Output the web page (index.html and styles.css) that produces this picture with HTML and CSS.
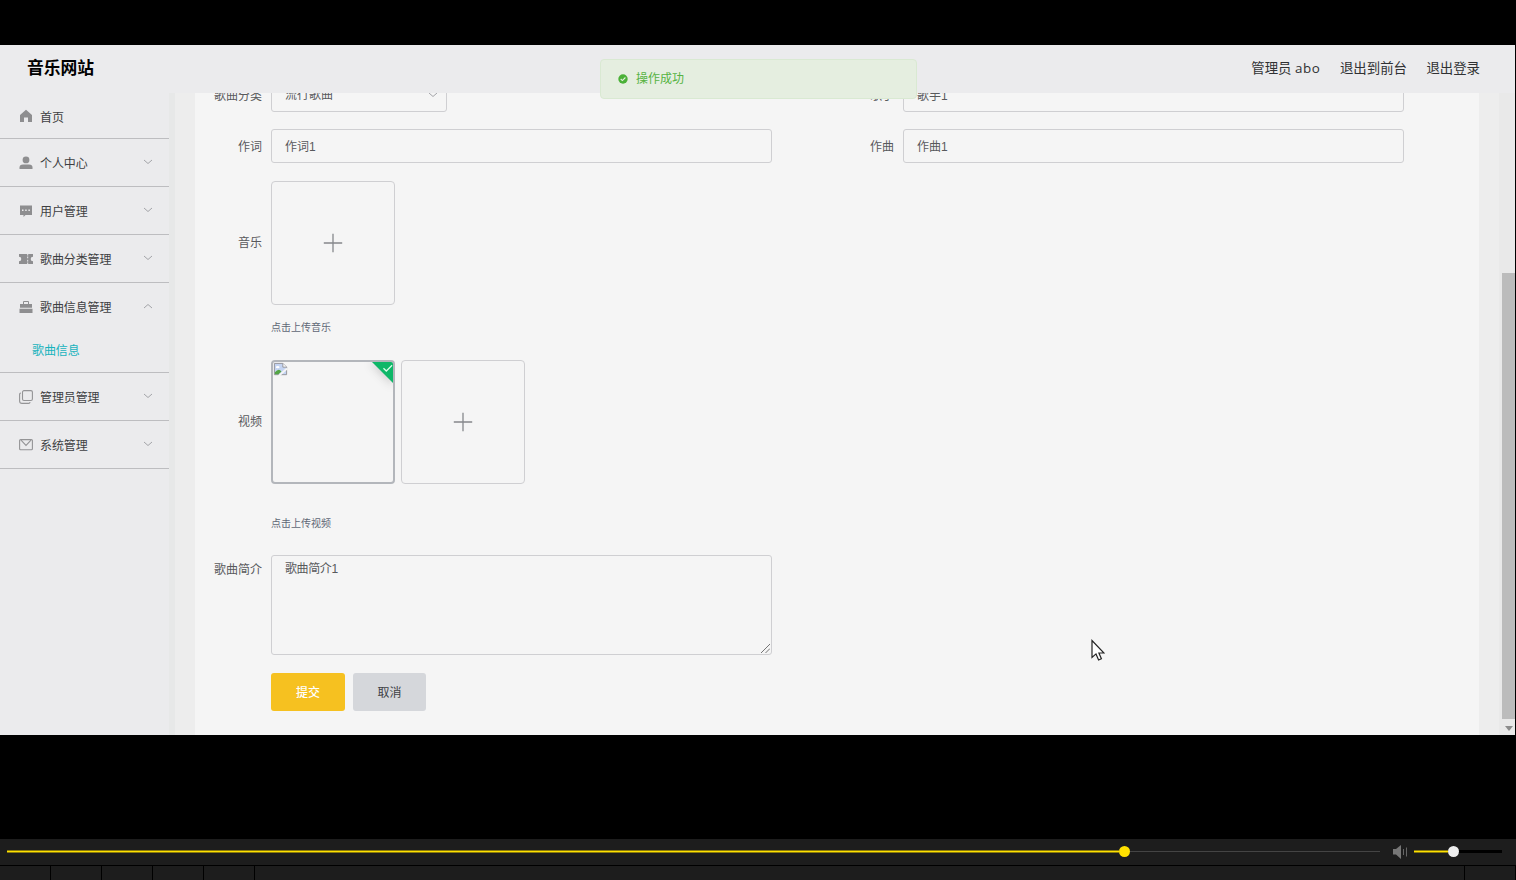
FILE: index.html
```html
<!DOCTYPE html>
<html lang="zh-CN">
<head>
<meta charset="utf-8">
<title>音乐网站</title>
<link rel="stylesheet" href="styles.css">
</head>
<body>
<div class="app">
  <header class="header">
    <h1 class="brand">音乐网站</h1>
    <nav class="user-nav"><span>管理员 <span class="name">abo</span></span><span>退出到前台</span><span>退出登录</span></nav>
  </header>
  <div class="body">
    <aside class="sidebar">
      <div class="item first"><svg class="icon" viewBox="0 0 14 14"><path fill="#8e8e90" d="M7 .8 13 6v7H9V8.500H5V13H1V6z"/></svg><span>首页</span></div>
      <div class="item"><svg class="icon" viewBox="0 0 14 14"><circle cx="7" cy="3.900" r="3.400" fill="#8e8e90"/><path fill="#8e8e90" d="M.5 13v-1.500Q.5 8.500 4 8.500h6q3.500 0 3.500 3V13z"/></svg><span>个人中心</span><svg class="arrow" viewBox="0 0 10 6"><path d="m1 1 4 3.500L9 1"/></svg></div>
      <div class="item"><svg class="icon" viewBox="0 0 14 14"><path fill="#8e8e90" d="M1 1.500h12v9.500H6.500L4.500 13v-2H1z"/><path fill="#ebebed" d="M3 5.500h1.500V7H3zm3.200 0h1.500V7H6.200zm3.200 0h1.500V7H9.400z"/></svg><span>用户管理</span><svg class="arrow" viewBox="0 0 10 6"><path d="m1 1 4 3.500L9 1"/></svg></div>
      <div class="item"><svg class="icon" viewBox="0 0 14 14"><path fill="#8e8e90" d="M0 2h8.200v1.500h1V2H14v2.700a2.300 2.300 0 0 0 0 4.600V12H9.200v-1.500h-1V12H0V9.300a2.300 2.300 0 0 0 0-4.600z"/><path stroke="#ebebed" d="M8.700 4.500v1.800m0 1.500v1.800"/></svg><span>歌曲分类管理</span><svg class="arrow" viewBox="0 0 10 6"><path d="m1 1 4 3.500L9 1"/></svg></div>
      <div class="item open"><svg class="icon" viewBox="0 0 14 14"><path fill="none" stroke="#8e8e90" d="M4.500 4V1.500h5V4"/><path fill="#8e8e90" d="M1 4h12v3.800H1zM.5 8.700h13V13H.5z"/></svg><span>歌曲信息管理</span><svg class="arrow" viewBox="0 0 10 6"><path d="m1 5 4-3.500L9 5"/></svg></div>
      <div class="subitem">歌曲信息</div>
      <div class="item"><svg class="icon" viewBox="0 0 14 14"><g fill="none" stroke="#949496" stroke-width="1.100"><rect x="3.500" y=".6" width="9.900" height="9.900" rx="1.500"/><path d="M2 3Q.6 3 .6 4.500V11q0 2.400 2.400 2.400h6.500q1.500 0 1.500-1.400"/></g></svg><span>管理员管理</span><svg class="arrow" viewBox="0 0 10 6"><path d="m1 1 4 3.500L9 1"/></svg></div>
      <div class="item"><svg class="icon" viewBox="0 0 14 14"><g fill="none" stroke="#949496" stroke-width="1.100"><rect x=".6" y="1.600" width="12.800" height="10.200" rx="1"/><path d="m2 2.200 5 5.300 5-5.300"/></g></svg><span>系统管理</span><svg class="arrow" viewBox="0 0 10 6"><path d="m1 1 4 3.500L9 1"/></svg></div>
    </aside>
    <main class="main">
      <form class="form">
        <div class="row pair">
          <div class="field"><label>歌曲分类</label><div class="input select"><span>流行歌曲</span><svg class="arrow" viewBox="0 0 10 6"><path d="m1 1 4 3.500L9 1"/></svg></div></div>
          <div class="field"><label>歌手</label><div class="input">歌手1</div></div>
        </div>
        <div class="row pair">
          <div class="field"><label>作词</label><div class="input">作词1</div></div>
          <div class="field"><label>作曲</label><div class="input">作曲1</div></div>
        </div>
        <div class="field upload-row music">
          <label>音乐</label>
          <div class="upload"><svg class="plus" viewBox="0 0 20 20"><path d="M10 .8v18.400M.8 10h18.400"/></svg></div>
        </div>
        <p class="tip">点击上传音乐</p>
        <div class="field upload-row video">
          <label>视频</label>
          <div class="upload done">
            <svg class="broken" viewBox="0 0 16 16"><path fill="#c4d4f2" stroke="#929298" d="M1.500 1.500h9l4 4v8h-13z"/><path fill="#fff" stroke="#929298" d="M10.500 1.500v4h4"/><ellipse cx="5" cy="5.500" rx="2" ry="1.200" fill="#fff"/><path fill="#54a545" d="M2 13V11q4-5 7-1l-3 3z"/><path stroke="#f5f5f5" stroke-width="2" d="m6 15 9-8"/></svg>
            <svg class="badge" viewBox="0 0 24 24"><path fill="#0eb768" d="M0 0h24v24z"/><path fill="none" stroke="#d9ffe9" stroke-width="1.300" d="m13 7.500 3 3 6-6"/></svg>
          </div>
          <div class="upload"><svg class="plus" viewBox="0 0 20 20"><path d="M10 .8v18.400M.8 10h18.400"/></svg></div>
        </div>
        <p class="tip second">点击上传视频</p>
        <div class="field intro">
          <label>歌曲简介</label>
          <div class="textarea"><span>歌曲简介1</span><svg class="grip" viewBox="0 0 10 10"><path d="m0 10 10-10M5 10l5-5"/></svg></div>
        </div>
        <div class="actions"><button type="button" class="btn primary">提交</button><button type="button" class="btn">取消</button></div>
      </form>
    </main>
    <div class="scrollbar"><div class="thumb"></div><div class="down"></div></div>
  </div>
  <div class="toast"><svg viewBox="0 0 10 10"><circle cx="5" cy="5" r="4.700" fill="#4ab137"/><path fill="none" stroke="#e5eee0" stroke-width="1.100" d="m2.700 5 1.700 1.600 3-3.100"/></svg><span>操作成功</span></div>
  <svg class="cursor" viewBox="0 0 14 22"><path fill="#fff" stroke="#222" stroke-width="1.200" d="M1 1v17l4-3.600L7.600 20.500l2.800-1.200L7.900 13.500H13z"/></svg>
</div>
<footer class="player">
  <div class="controls">
    <div class="track"><div class="played"></div><div class="knob"></div></div>
    <svg class="speaker" viewBox="0 0 15 14"><path fill="#777" d="M0 4h3l5-4v14L3 9.500H0z"/><path stroke="#666" d="M10.500 4v6M13.500 2.500v9"/></svg>
    <div class="volume"><div class="played"></div><div class="knob"></div></div>
  </div>
  <div class="tabs"><i></i><i></i><i></i><i></i><i></i><i class="wide"></i><i class="last"></i></div>
</footer>
</body>
</html>
```

FILE: styles.css
```css
* { box-sizing: border-box; }
body {
  margin: 0;
  width: 1516px;
  height: 880px;
  overflow: hidden;
  background: #000;
  font: 12px "Liberation Sans", "Noto Sans CJK SC", sans-serif;
  color: #58595c;
  display: flex;
  flex-direction: column;
}
svg { display: block; flex: none; }
.app {
  position: relative;
  width: 1515px;
  height: 690px;
  margin-top: 45px;
  display: flex;
  flex-direction: column;
  background: #ebebed;
}
.header {
  height: 48px;
  flex: none;
  display: flex;
  justify-content: space-between;
  align-items: center;
  padding: 0 35px 2px 27px;
}
.brand { margin: 2px 0 0; font-size: 16.8px; line-height: 24px; color: #000; }
.user-nav {
  display: flex;
  gap: 19.500px;
  font: 13.4px/20px "Open Sans", "Noto Sans CJK SC", sans-serif;
  color: #303133;
}
.name { letter-spacing: .6px; }
.body { display: flex; height: 642px; overflow: hidden; }

.sidebar { width: 169px; flex: none; }
.item {
  height: 48px;
  display: flex;
  align-items: center;
  padding: 0 16px 0 19px;
  border-bottom: 1px solid #bdbdc0;
  color: #3e3f42;
}
.item span { letter-spacing: -.1px; }
.item.first { height: 46px; padding-top: 1px; }
.item.open { border-bottom-color: transparent; }
.icon { width: 14px; height: 14px; margin-right: 7px; }
.arrow { width: 10px; height: 6px; fill: none; stroke: #a3a4a8; stroke-width: 1; }
.item .arrow { margin-left: auto; margin-top: -1px; }
.subitem {
  height: 42px;
  line-height: 40px;
  padding-left: 32px;
  letter-spacing: -.1px;
  color: #18b3bd;
  border-bottom: 1px solid #bdbdc0;
}

.main {
  flex: 1;
  overflow: hidden;
  background: #ededed;
  border-left: 6px solid #e7e8e8;
  padding: 0 20px;
}
.form {
  height: 657px;
  margin-top: -15px;
  background: #f5f5f5;
}
.field { display: flex; }
.field label { width: 67px; flex: none; text-align: right; line-height: 36px; margin-right: 9px; }
.pair { display: flex; gap: 75px; height: 34px; margin-bottom: 17px; }
.pair .field:nth-child(2) label { width: 47px; }
.input {
  width: 501px;
  height: 34px;
  border: 1px solid #cfcfd2;
  border-radius: 3px;
  padding: 0 13px;
  line-height: 34px;
}
.select { display: flex; width: 176px; align-items: center; justify-content: space-between; padding-right: 8px; margin-right: 325px; }
.upload-row { align-items: center; }
.music { padding-top: 1px; }
.upload {
  position: relative;
  width: 124px;
  height: 124px;
  border: 1px solid #cfcfd2;
  border-radius: 4px;
  display: flex;
  align-items: center;
  justify-content: center;
  margin-right: 6px;
  overflow: hidden;
}
.done { border: 2px solid #b3b6bb; }
.plus { width: 20px; height: 20px; stroke: #85878b; stroke-width: 1.300; }
.broken { position: absolute; left: 0; top: 0; width: 15px; height: 15px; }
.badge { position: absolute; right: -1px; top: -1px; width: 23px; height: 23px; filter: drop-shadow(-1px 2px 4px #ccc); }
.tip { margin: 14px 0 0 76px; height: 18px; font-size: 10px; line-height: 18px; color: #606775; }
.video { margin-top: 23px; }
.video label { line-height: 34px; }
.tip.second { margin-top: 31px; }
.intro { margin-top: 22px; }
.intro label { line-height: 30px; }
.textarea {
  position: relative;
  width: 501px;
  height: 100px;
  border: 1px solid #cfcfd2;
  border-radius: 3px;
  padding: 4px 13px;
  line-height: 18px;
  letter-spacing: -.4px;
}
.grip { position: absolute; right: 1px; bottom: 1px; width: 9px; height: 9px; stroke: #666; }
.actions { display: flex; gap: 8px; margin: 18px 0 0 76px; }
.btn {
  width: 73px;
  height: 38px;
  padding: 0 0 2px;
  border: 0;
  border-radius: 3px;
  background: #d5d7db;
  color: #404145;
  font: inherit;
}
.primary { width: 74px; background: #f6c120; color: #fff; font-weight: 500; }

.scrollbar {
  width: 16px;
  flex: none;
  background: #e9e9e9;
  padding: 180px 0 0 3px;
}
.thumb { height: 446px; background: #bcbcbc; }
.down { width: 0; margin: 7px 0 0 3px; border: 4px solid transparent; border-top: 5px solid #8c8c8c; border-bottom: 0; }

.toast {
  position: absolute;
  left: 600px;
  top: 14px;
  width: 317px;
  height: 40px;
  display: flex;
  align-items: center;
  gap: 8px;
  padding: 0 17px;
  border: 1px solid #d9e9d2;
  border-radius: 4px;
  background: #e5eee0;
  color: #56b342;
}
.toast svg { width: 10px; height: 10px; }
.toast span { margin-top: -3px; }
.cursor { position: absolute; left: 1091px; top: 594px; width: 14px; height: 23px; }

.player { margin-top: 104px; height: 41px; background: #000; }
.controls {
  height: 26px;
  display: flex;
  align-items: center;
  padding: 0 14px 1px 7px;
  background: #1d1d1d;
}
.track, .volume { display: flex; align-items: center; height: 11px; }
.track { width: 1373px; background: linear-gradient(#444, #444) center / 100% 1px no-repeat; }
.played { height: 3px; border: solid #8a7b0b; border-width: 1px 0; background: #ffe100; }
.track .played { width: 1112px; }
.track .knob { width: 11px; height: 11px; border-radius: 50%; background: #ffe000; }
.speaker { width: 15px; height: 14px; margin: 0 6px 0 13px; }
.volume { width: 88px; background: linear-gradient(#000, #000) center / 100% 3px no-repeat; }
.volume .played { width: 34px; }
.volume .knob { width: 11px; height: 11px; border-radius: 50%; background: #eee; }
.tabs { display: flex; gap: 1px; height: 14px; margin-top: 1px; }
.tabs i { width: 50px; background: #1d1d1d; }
.tabs .wide { width: 1209px; }
.tabs .last { width: 50px; }
```
